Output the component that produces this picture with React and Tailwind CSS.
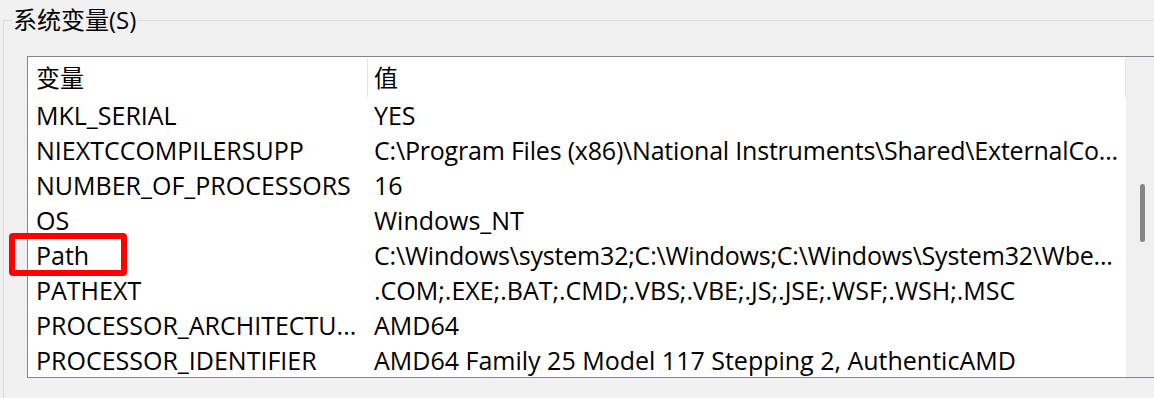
import React from "react";

const rows = [
  ["MKL_SERIAL", "YES", false],
  ["NIEXTCCOMPILERSUPP", "C:\\Program Files (x86)\\National Instruments\\Shared\\ExternalCo...", true],
  ["NUMBER_OF_PROCESSORS", "16", false],
  ["OS", "Windows_NT", false],
  ["Path", "C:\\Windows\\system32;C:\\Windows;C:\\Windows\\System32\\Wbe...", true],
  ["PATHEXT", ".COM;.EXE;.BAT;.CMD;.VBS;.VBE;.JS;.JSE;.WSF;.WSH;.MSC", false],
  ["PROCESSOR_ARCHITECTU...", "AMD64", false],
  ["PROCESSOR_IDENTIFIER", "AMD64 Family 25 Model 117 Stepping 2, AuthenticAMD", false],
];

export default function App() {
  return (
    <div
      className="relative w-[1154px] h-[398px] overflow-hidden bg-[#f0f0f0] pl-[3px] pt-[20px] text-[25px] text-black"
      style={{ fontFamily: '"Open Sans", "Noto Sans CJK SC", sans-serif' }}
    >
      <div className="h-[400px] border-l border-t border-[#dcdcdc]">
        <div className="-mt-[14px] ml-[8px] w-fit bg-[#f0f0f0] px-px h-[26px] leading-[26px] whitespace-nowrap text-[24px]">
          系统变量(S)
        </div>
        <div className="ml-[23px] mt-[23px] w-[1200px] h-[322px] border border-[#828790] bg-white flex">
          <div className="w-[1098px] flex flex-col">
            <div className="h-[40px] flex">
              <div className="w-[339px] pl-[8px] flex items-center leading-[30px] pt-[2px] text-[24px]">变量</div>
              <div className="w-px h-[39px] mt-px bg-[#e5e5e5]" />
              <div className="flex-1 pl-[6px] flex items-center leading-[30px] pt-[2px] text-[24px]">值</div>
              <div className="w-px h-[39px] mt-px bg-[#e5e5e5]" />
            </div>
            {rows.map(([k, v, tight]) => (
              <div key={k} className="h-[35px] flex items-center whitespace-nowrap leading-[30px]">
                <div className="w-[340px] shrink-0 pl-[8px]">{k}</div>
                <div className={tight ? "pl-[6px] tracking-[-0.2px]" : "pl-[6px]"}>{v}</div>
              </div>
            ))}
          </div>
          <div className="flex-1 bg-[#f0f0f0] pl-[14px] pt-[127px]">
            <div className="w-[5px] h-[58px] rounded-full bg-[#858585]" />
          </div>
        </div>
      </div>
      <div className="absolute left-[9px] top-[233px] w-[118px] h-[43px] border-[6px] border-[#ff0000] rounded-[4px]" />
    </div>
  );
}
